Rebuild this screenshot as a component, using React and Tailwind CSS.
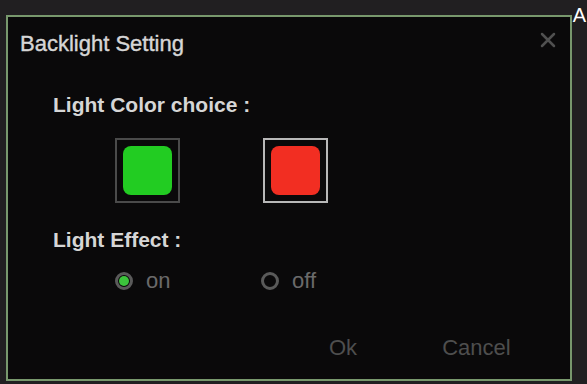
import React from 'react';

const font = { fontFamily: '"Liberation Sans", Arial, sans-serif' };

function Swatch ({ color, selected }) {
  return (
    <div
      className={
        'w-[65px] h-[65px] flex items-center justify-center border-2 ' +
        (selected ? 'border-[#b8b8b8]' : 'border-[#4a4a4a]')
      }
    >
      <div className={'w-[49px] h-[49px] rounded-[8px] ' + color} />
    </div>
  );
}

function Radio ({ label, checked }) {
  return (
    <div className="w-[146px] flex items-center gap-[13px]">
      <div className="w-[18px] h-[18px] rounded-full border-[3px] border-[#5a5a5a] flex items-center justify-center">
        {checked && <div className="w-[10px] h-[10px] rounded-full bg-[#3cc43c]" />}
      </div>
      <span className="text-[22px] leading-none text-[#6a6a6a]">{label}</span>
    </div>
  );
}

export default function App () {
  return (
    <div className="w-[587px] h-[384px] bg-[#211f21] relative overflow-hidden" style={font}>
      <span className="absolute right-[1px] top-[5px] text-[20px] text-white leading-none">A</span>
      <div className="ml-[6px] mt-[15px] w-[566px] h-[366px] border-2 border-[#78986d] bg-[#0a090a] relative">
        <svg className="absolute right-[14px] top-[15px]" width="16" height="16" viewBox="0 0 16 16">
          <path d="M2 2 L14 14 M14 2 L2 14" stroke="#505050" strokeWidth="2.5" strokeLinecap="round" />
        </svg>
        <div className="pl-[12px] pt-[14px] text-[22px] leading-[26px] text-[#d6d6d6] [-webkit-text-stroke:0.4px_#d6d6d6]">Backlight Setting</div>
        <div className="pl-[45px] pt-[36px] text-[21px] leading-[24px] text-[#d6d6d6] font-bold">Light Color choice :</div>
        <div className="flex pl-[107px] pt-[21px] gap-[83px] items-center">
          <Swatch color="bg-[#22cc22]" />
          <Swatch color="bg-[#f22e22]" selected />
        </div>
        <div className="pl-[45px] pt-[25px] text-[21px] leading-[24px] text-[#d6d6d6] font-bold">Light Effect :</div>
        <div className="flex pl-[107px] pt-[18px]">
          <Radio label="on" checked />
          <Radio label="off" />
        </div>
        <div className="flex pl-[321px] pt-[45px] gap-[85px] text-[22px] leading-none text-[#4e4e4e]">
          <span>Ok</span>
          <span>Cancel</span>
        </div>
      </div>
    </div>
  );
}
